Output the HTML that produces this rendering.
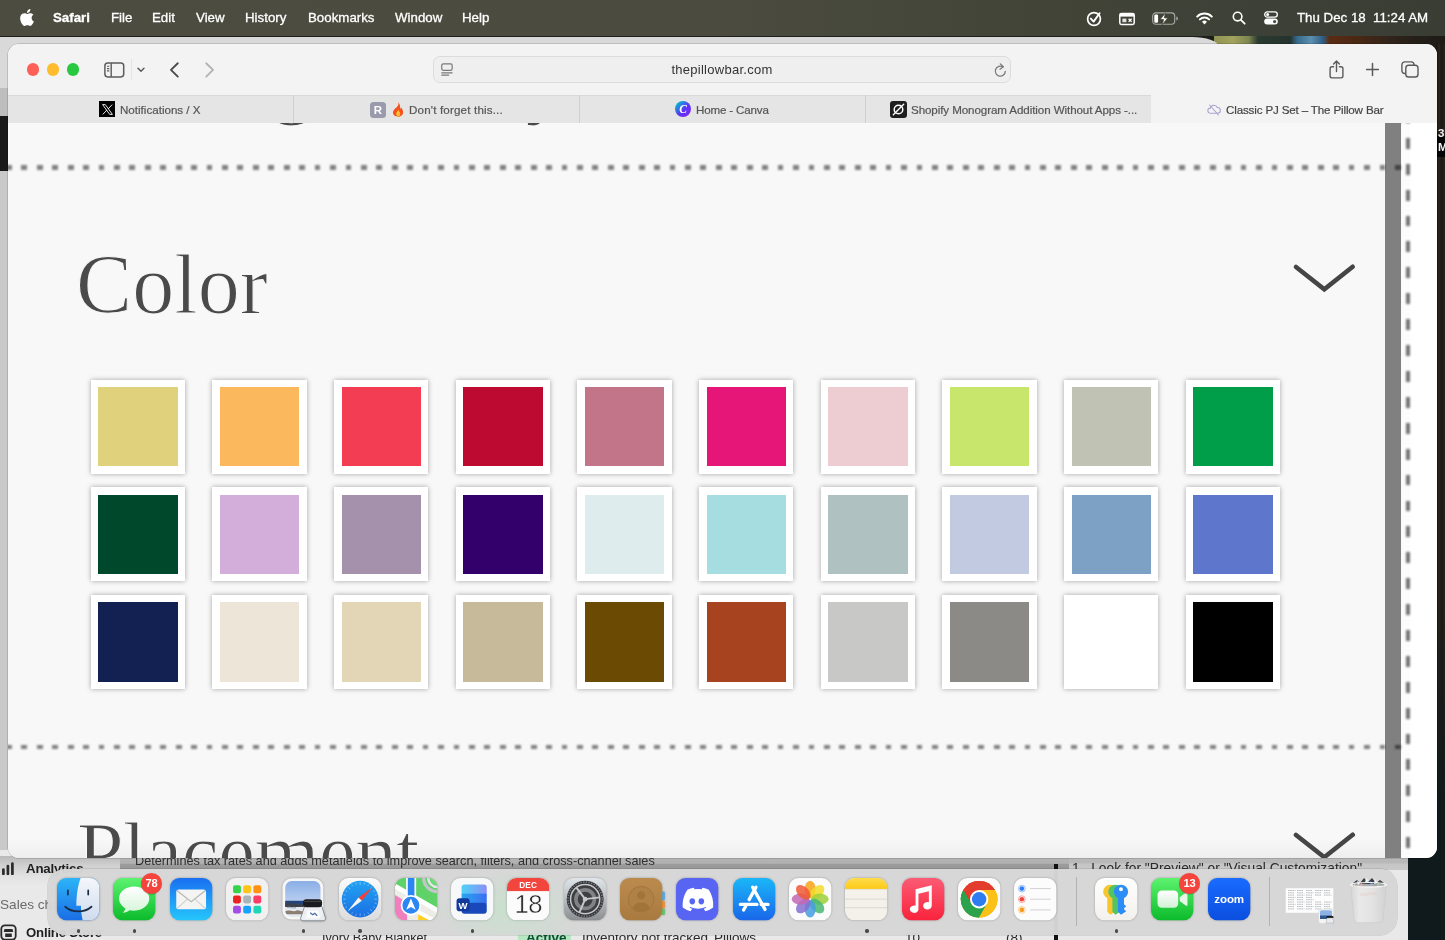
<!DOCTYPE html>
<html lang="en">
<head>
<meta charset="utf-8">
<title>Classic PJ Set – The Pillow Bar</title>
<style>
*{box-sizing:border-box;margin:0;padding:0}
html,body{width:1445px;height:940px;overflow:hidden}
body{position:relative;background:#1b1d1a;font-family:"Liberation Sans",sans-serif;color:#fff}
.abs{position:absolute}
span,.badge,.h2{will-change:transform}
/* wallpaper */
#wall{left:0;top:0;width:1445px;height:940px;background:#1d1f1b}
/* background windows */
#bgwinTop{left:0;top:37px;width:1218px;height:90px;background:#d9d9d9;border-radius:0 26px 0 0 / 0 9px 0 0}
#bgLeftDark{left:0;top:116px;width:9px;height:55px;background:#191919}
#bgLeftTab{left:0;top:88px;width:9px;height:28px;background:#bebebe}
#bgLeftGray{left:0;top:171px;width:9px;height:700px;background:#c9c9c9}
#bgBottom{left:0;top:850px;width:1408px;height:90px;background:#e9e9e9}
/* menubar */
#menubar{left:0;top:0;width:1445px;height:36px;background:linear-gradient(90deg,#4c4d40 0%,#4b4c3f 50%,#414337 75%,#3c4036 90%,#393d34 100%)}
#menubar span{position:absolute;top:9px;font-size:13.3px;line-height:17px;color:#fff;white-space:nowrap;-webkit-text-stroke:.3px #fff}
/* safari window */
#win{left:8px;top:44px;width:1429px;height:814px;border-radius:11px;background:#f8f8f8;overflow:hidden;box-shadow:0 0 0 0.5px rgba(0,0,0,.25)}
#toolbar{left:0;top:0;width:1429px;height:51px;background:#f3f3f3}
#tabbar{left:0;top:51px;width:1429px;height:28.5px;background:#e5e5e5}
#content{left:0;top:79.5px;width:1429px;height:735px;background:#f8f8f8}

#clip{left:0;top:79.3px;width:1429px;height:736px;overflow:hidden}
#wc{left:-8px;top:-123.3px;width:1445px;height:940px}
#pagebg{left:8px;top:123.3px;width:1377.2px;height:736px;background:#f8f8f8}
#graybar{left:1385.2px;top:123.3px;width:16.3px;height:736px;background:#808080}
#strip{left:1401.5px;top:123.3px;width:9px;height:736px;background:#fcfcfc}
#white{left:1410px;top:123.3px;width:28px;height:736px;background:#fff}
.hdots{left:5.670px;width:1395.800px;height:4.700px;background:repeating-linear-gradient(90deg,rgba(0,0,0,.48) 0,rgba(0,0,0,.48) 5.800px,transparent 5.800px,transparent 15.433px);filter:blur(1px)}
#vdash{left:1406.100px;top:111.900px;width:4.200px;height:760px;background:repeating-linear-gradient(180deg,rgba(0,0,0,.55) 0,rgba(0,0,0,.55) 10.800px,transparent 10.800px,transparent 25.900px);filter:blur(.8px)}
.h2{font-family:"Liberation Serif",serif;font-size:84px;line-height:84px;letter-spacing:-1.35px;color:#4a4a4a;white-space:nowrap;font-weight:400;-webkit-text-stroke:1.1px #f8f8f8}
.sw{position:absolute;width:94.3px;height:94.3px;background:#fff;box-shadow:0 0 5px rgba(0,0,0,.34)}
.sw i{position:absolute;left:7.5px;top:7.5px;width:79.3px;height:79.3px;display:block}

#toolbar svg,#tabbar svg{position:absolute;overflow:visible}
.tl{position:absolute;top:19.3px;width:12.4px;height:12.4px;border-radius:50%}
#url{left:425.400px;top:11.700px;width:578px;height:27.200px;border-radius:7px;background:#efefef;border:1px solid #dcdcdc}
#url span{position:absolute;left:0;width:100%;top:5.700px;text-align:center;font-size:13px;line-height:16px;color:#333;letter-spacing:.27px}
.tab{position:absolute;top:0;height:28.5px;width:286px;border-left:1px solid #cfcfcf;box-shadow:inset 0 1px 0 #d9d9d9}
.tab span{position:absolute;top:7.6px;font-size:11.6px;line-height:14px;color:#555;white-space:nowrap;-webkit-text-stroke:.2px #555}
.tab.act{background:#f3f3f3;border-left:0;box-shadow:none}
.tab.act span{color:#444;-webkit-text-stroke:.2px #444}
.fav{position:absolute;top:6.3px;width:16px;height:16px;border-radius:3.5px}

.ic{overflow:visible;filter:drop-shadow(0 .6px .8px rgba(0,0,0,.28))}
.rdot{width:3.400px;height:3.400px;border-radius:50%;background:#4a4a4a}
.badge{width:21px;height:21px;border-radius:50%;background:#f5443b;color:#fff;font-size:11.200px;font-weight:700;line-height:21px;text-align:center;letter-spacing:-.2px;box-shadow:0 .5px 1px rgba(0,0,0,.3)}
.bgt{position:absolute;white-space:nowrap;color:#2a2a2a;font-size:14.500px;line-height:18px}
/* dock */
#dock{left:47.500px;top:869px;width:1349.500px;height:66px;border-radius:17px;background:rgba(214,214,214,.975);box-shadow:0 0 0 0.5px rgba(0,0,0,.18)}
</style>
</head>
<body>
<div id="wall" class="abs"></div>
<div class="abs" style="left:1214px;top:36px;width:231px;height:12px;background:linear-gradient(90deg,#8f9252 0,#a3a35e 8%,#7d8650 15%,#2b3a30 19%,#24332d 33%,#356a8c 36%,#5d8fae 42%,#2f5f86 47%,#5b2c14 50%,#4a2814 62%,#33241a 75%,#241f19 88%,#1d1b17 100%)"></div>
<div class="abs" style="left:1436px;top:44px;width:9px;height:900px;background:linear-gradient(90deg,#15120f 0,#2c251e 35%,#1c1814 60%,#2a231c 100%)"></div>
<div class="abs" style="left:1407px;top:600px;width:38px;height:340px;background:linear-gradient(180deg,rgba(16,25,27,0) 0,rgba(16,25,27,1) 60%,#10191b 100%)"></div>
<div class="abs" style="left:1437px;top:136px;width:8px;height:21px;background:#050505"></div>
<span class="abs" style="left:1437.500px;top:126px;font-size:11.500px;line-height:14px;font-weight:700;color:#f2f2f2">3</span>
<span class="abs" style="left:1437.500px;top:139.500px;font-size:11.500px;line-height:14px;font-weight:700;color:#f2f2f2">M</span>
<div id="bgwinTop" class="abs"></div>
<div id="bgLeftTab" class="abs"></div>
<div id="bgLeftDark" class="abs"></div>
<div id="bgLeftGray" class="abs"></div>
<div id="bgBottom" class="abs"></div>
<div class="abs" style="left:0;top:856px;width:122px;height:30px;background:linear-gradient(180deg,#b9b9b9 0,#cfcfcf 30%,#e3e3e3 70%,#e9e9e9 100%)"></div>
<div class="abs" style="left:120px;top:856px;width:950px;height:12.500px;background:linear-gradient(180deg,#b4b4b4 0,#b1b1b1 56%,#9c9c9c 64%,#979797 100%);overflow:hidden"><span class="bgt" style="left:15px;top:-4.300px;font-size:12.700px;color:#2e2e2e">Determines tax rates and adds metafields to improve search, filters, and cross-channel sales</span></div>
<div class="abs" style="left:1069px;top:856px;width:339px;height:14px;background:linear-gradient(180deg,#bababa 0,#b8b8b8 50%,#c5c5c5 56%,#c8c8c8 100%);overflow:hidden"><span class="bgt" style="left:3px;top:4.200px;font-size:13.800px;color:#2b2b2b">1.&nbsp;&nbsp;Look for "Preview" or "Visual Customization"</span></div>
<div class="abs" style="left:1053.500px;top:863.500px;width:4.500px;height:80px;background:#111"></div>
<svg class="abs" style="left:2px;top:861.500px" width="12" height="13" viewBox="0 0 12 13"><path d="M1.400 12V7.500M5.900 12V4M10.400 12V1.500" stroke="#2a2a2a" stroke-width="2.700" stroke-linecap="round"/></svg>
<span class="bgt" style="left:26px;top:859.500px;font-size:13.300px;color:#1f1f1f;font-weight:700;letter-spacing:-.2px">Analytics</span>
<span class="bgt" style="left:0;top:895.500px;font-size:13.600px;color:#6b6b6b">Sales channels</span>
<svg class="abs" style="left:0;top:924px" width="17" height="17" viewBox="0 0 17 17"><rect x="1.300" y="1.300" width="14.400" height="14.400" rx="3.600" fill="none" stroke="#2a2a2a" stroke-width="1.800"/><path d="M4.500 5h8l.8 3h-9.600ZM5.200 9.500h6.600v3.500H5.200Z" fill="#2a2a2a"/></svg>
<span class="bgt" style="left:26px;top:923.500px;font-size:13.200px;color:#1f1f1f;font-weight:700;letter-spacing:-.2px">Online Store</span>
<span class="bgt" style="left:322px;top:929px;font-size:12.600px">Ivory Baby Blanket</span>
<div class="abs" style="left:518px;top:931px;width:53px;height:12px;background:#b5e7c2"></div>
<span class="bgt" style="left:526px;top:929px;font-size:13.500px;color:#0c5132;font-weight:700">Active</span>
<span class="bgt" style="left:582px;top:929px;font-size:13.500px">Inventory not tracked</span>
<span class="bgt" style="left:714px;top:929px;font-size:13.500px">Pillows</span>
<span class="bgt" style="left:905px;top:929px;font-size:13.500px">10</span>
<span class="bgt" style="left:1006px;top:929px;font-size:13.500px">(8)</span>

<div id="menubar" class="abs">
  <svg class="abs" style="left:19.5px;top:8.5px" width="14" height="17" viewBox="2 0 20 24"><path fill="#fff" d="M12.152 6.896c-.948 0-2.415-1.078-3.96-1.04-2.04.027-3.91 1.183-4.961 3.014-2.117 3.675-.546 9.103 1.519 12.09 1.013 1.454 2.208 3.09 3.792 3.039 1.52-.065 2.09-.987 3.935-.987 1.831 0 2.35.987 3.96.948 1.637-.026 2.676-1.48 3.676-2.948 1.156-1.688 1.636-3.325 1.662-3.415-.039-.013-3.182-1.221-3.22-4.857-.026-3.04 2.48-4.494 2.597-4.559-1.429-2.09-3.623-2.324-4.39-2.376-2-.156-3.675 1.09-4.61 1.09zM15.53 3.83c.843-1.012 1.4-2.427 1.245-3.83-1.207.052-2.662.805-3.532 1.818-.78.896-1.454 2.338-1.273 3.714 1.338.104 2.715-.688 3.559-1.701"/></svg>
  <span style="left:53px;font-weight:700">Safari</span>
  <span style="left:111px">File</span>
  <span style="left:152px">Edit</span>
  <span style="left:195.5px">View</span>
  <span style="left:244.5px">History</span>
  <span style="left:307.5px">Bookmarks</span>
  <span style="left:394.5px">Window</span>
  <span style="left:462px">Help</span>
  <!-- status icons -->
  <svg class="abs" style="left:1086px;top:10px" width="17" height="17" viewBox="0 0 17 17"><circle cx="8" cy="9" r="6.4" fill="none" stroke="#fff" stroke-width="1.7"/><path d="M4.8 8.6 L7.6 11.6 L13.6 3.2" fill="none" stroke="#fff" stroke-width="1.9" stroke-linecap="round" stroke-linejoin="round"/></svg>
  <svg class="abs" style="left:1119px;top:11.500px" width="16" height="14" viewBox="0 0 16 14"><rect x=".8" y="1.6" width="14.4" height="10.8" rx="1.6" fill="none" stroke="#fff" stroke-width="1.5"/><rect x=".8" y="1.6" width="14.4" height="3" fill="#fff"/><rect x="3.4" y="6.6" width="4" height="3.6" fill="#fff" opacity=".85"/><path d="M9.6 6.8l3 3m0-3l-3 3" stroke="#fff" stroke-width="1.3"/></svg>
  <svg class="abs" style="left:1151.5px;top:11.800px" width="27" height="14" viewBox="0 0 27 14"><rect x=".7" y=".9" width="22" height="11.4" rx="3.2" fill="none" stroke="#fff" stroke-opacity=".55" stroke-width="1.1"/><rect x="2.3" y="2.5" width="3.800" height="8.200" rx="1.300" fill="#fff"/><path d="M24.3 4.6c1.1.3 1.6 1.1 1.6 2s-.5 1.700-1.600 2z" fill="#fff" fill-opacity=".55"/><path d="M13.400 0.800 L8.200 7.500 h3.400 l-1.400 5.300 l5.600 -6.900 h-3.500z" fill="#fff" stroke="#4a4b3f" stroke-width=".8"/></svg>
  <svg class="abs" style="left:1196px;top:11.600px" width="17" height="13" viewBox="0 0 17 13"><path d="M1.200 4.600 a10.400 10.400 0 0 1 14.600 0" fill="none" stroke="#fff" stroke-width="2" stroke-linecap="round"/><path d="M3.900 7.400 a6.600 6.600 0 0 1 9.200 0" fill="none" stroke="#fff" stroke-width="2" stroke-linecap="round"/><path d="M8.500 12.400 l-2.500 -2.700 a3.600 3.600 0 0 1 5 0z" fill="#fff"/></svg>
  <svg class="abs" style="left:1231.5px;top:11px" width="14" height="14" viewBox="0 0 14 14"><circle cx="5.600" cy="5.600" r="4.300" fill="none" stroke="#fff" stroke-width="1.6"/><path d="M8.800 8.800 L12.700 12.700" stroke="#fff" stroke-width="1.8" stroke-linecap="round"/></svg>
  <svg class="abs" style="left:1264px;top:11px" width="14" height="14" viewBox="0 0 14 14"><rect x=".7" y=".9" width="12.600" height="5.200" rx="2.600" fill="none" stroke="#fff" stroke-width="1.3"/><circle cx="3.600" cy="3.500" r="1.500" fill="#fff"/><rect x=".2" y="7.600" width="13.600" height="6" rx="3" fill="#fff"/><circle cx="10.600" cy="10.600" r="1.600" fill="#4a4b3f"/></svg>
  <span style="left:1296.500px">Thu Dec 18</span>
  <span style="left:1373px">11:24 AM</span>
</div>

<div id="win" class="abs">
  <div id="toolbar" class="abs">
    <div class="tl" style="left:19px;background:#fe5f57"></div>
    <div class="tl" style="left:38.800px;background:#febc2e"></div>
    <div class="tl" style="left:58.500px;background:#28c840"></div>
    <svg style="left:95.500px;top:17.500px" width="21" height="16" viewBox="0 0 21 16"><rect x=".9" y=".9" width="18.800" height="14" rx="2.800" fill="none" stroke="#5c5c5c" stroke-width="1.500"/><path d="M7.200 1v14" stroke="#5c5c5c" stroke-width="1.400"/><path d="M3 4.300h2.300M3 6.600h2.300M3 8.900h2.300" stroke="#5c5c5c" stroke-width="1.100"/></svg>
    <div class="abs" style="left:122.500px;top:15px;width:1px;height:21px;background:#e4e4e4"></div>
    <svg style="left:128.600px;top:22.800px" width="8" height="6" viewBox="0 0 8 6"><path d="M1 1.200l3 3 3-3" fill="none" stroke="#5c5c5c" stroke-width="1.500" stroke-linecap="round" stroke-linejoin="round"/></svg>
    <svg style="left:160.500px;top:17.600px" width="11" height="16" viewBox="0 0 11 16"><path d="M8.800 1.300L2 7.900l6.800 6.700" fill="none" stroke="#4a4a4a" stroke-width="1.900" stroke-linecap="round" stroke-linejoin="round"/></svg>
    <svg style="left:195.500px;top:17.600px" width="11" height="16" viewBox="0 0 11 16"><path d="M2.200 1.300L9 7.900l-6.800 6.700" fill="none" stroke="#b3b3b3" stroke-width="1.900" stroke-linecap="round" stroke-linejoin="round"/></svg>
    <div id="url" class="abs"><span>thepillowbar.com</span>
      <svg style="left:6.300px;top:6.300px" width="12" height="13" viewBox="0 0 13 14"><rect x=".8" y=".8" width="11.300" height="7.200" rx="1.800" fill="none" stroke="#7a7a7a" stroke-width="1.300"/><path d="M3 4.600h6.800" stroke="#7a7a7a" stroke-width="1.200" opacity=".0"/><path d="M.8 10.600h11.300M.8 13.200h7.400" stroke="#7a7a7a" stroke-width="1.300" stroke-linecap="round"/></svg>
      <svg style="left:559.200px;top:6.400px" width="13" height="14" viewBox="0 0 13 14"><path d="M11.300 8.300a5 5 0 1 1-2.300-4.300" fill="none" stroke="#7a7a7a" stroke-width="1.300" stroke-linecap="round"/><path d="M6.300.9l3 2.900-3.300 2.400" fill="none" stroke="#7a7a7a" stroke-width="1.300" stroke-linecap="round" stroke-linejoin="round"/></svg>
    </div>
    <svg style="left:1320.500px;top:15.500px" width="15" height="19" viewBox="0 0 15 19"><path d="M4.600 6.700H2.900a1.800 1.800 0 0 0-1.800 1.800v7.600a1.800 1.800 0 0 0 1.800 1.800h9.200a1.800 1.800 0 0 0 1.800-1.800V8.500a1.800 1.800 0 0 0-1.800-1.800h-1.700" fill="none" stroke="#5a5a5a" stroke-width="1.400" stroke-linecap="round"/><path d="M7.500 11.600V1.300M4.600 3.900l2.900-2.800 2.900 2.800" fill="none" stroke="#5a5a5a" stroke-width="1.400" stroke-linecap="round" stroke-linejoin="round"/></svg>
    <svg style="left:1357.500px;top:18.500px" width="13" height="13" viewBox="0 0 13 13"><path d="M6.500.6v11.800M.6 6.500h11.800" stroke="#5a5a5a" stroke-width="1.500" stroke-linecap="round"/></svg>
    <svg style="left:1392.500px;top:16.500px" width="18" height="17" viewBox="0 0 18 17"><rect x="4.800" y="4.300" width="12.200" height="11.700" rx="2.800" fill="#f3f3f3" stroke="#5a5a5a" stroke-width="1.400"/><path d="M4.700 12.500h-1a2.800 2.800 0 0 1-2.800-2.800V3.700A2.800 2.800 0 0 1 3.700.9h6.500A2.800 2.800 0 0 1 13 3.700v.5" fill="none" stroke="#5a5a5a" stroke-width="1.400"/></svg>
  </div>
  <div id="tabbar" class="abs">
    <div class="tab" style="left:0;border-left:0">
      <div class="fav" style="left:91.200px;background:#000;border-radius:0"><svg style="left:2.500px;top:2.500px" width="11" height="11" viewBox="0 0 11 11"><path d="M.6.600h2.700l7.100 9.800H7.700z" fill="none" stroke="#fff" stroke-width=".9"/><path d="M.8 10.400L4.900 6M10.200.6L6.200 4.900" stroke="#fff" stroke-width=".9"/></svg></div>
      <span style="left:112.400px">Notifications / X</span>
    </div>
    <div class="tab" style="left:285px">
      <div class="fav" style="left:76px;top:6.900px;background:#9a9aad"><svg style="left:0;top:0" width="16" height="16" viewBox="0 0 16 16"><text x="8" y="12.200" text-anchor="middle" font-family="Liberation Sans,sans-serif" font-weight="700" font-size="11.500" fill="#fff">R</text></svg></div>
      <svg style="left:98px;top:6.800px" width="12" height="15" viewBox="0 0 12 15"><path d="M6.300.3c.6 2.400-.4 3.700-1.700 5C3.200 6.600 1 8 1 10.600 1 13.100 3.300 14.800 6 14.800s5.100-1.600 5.100-4.500c0-2.300-1.300-3.500-1.900-5.100-.5.700-.6 1.400-1 2C8.300 4.600 7.900 1.900 6.300.3z" fill="#f4511e"/><path d="M6.100 7.400c.3 1.500-1.900 2.400-1.900 4.400 0 1.500 1 2.600 2 2.600s2.100-1 2.100-2.500c0-1.800-1.500-2.700-2.200-4.500z" fill="#ffc233"/></svg>
      <span style="left:114.800px;letter-spacing:.17px">Don't forget this...</span>
    </div>
    <div class="tab" style="left:571px">
      <div class="fav" style="left:95.200px;top:6.300px;border-radius:50%;background:linear-gradient(135deg,#00c4cc 10%,#5a32fa 55%,#7d2ae8 90%)"><svg style="left:0;top:0" width="16" height="16" viewBox="0 0 16 16"><text x="8.200" y="12" text-anchor="middle" font-family="Liberation Serif,serif" font-style="italic" font-weight="700" font-size="11.500" fill="#fff">C</text></svg></div>
      <span style="left:116.400px;letter-spacing:-.17px">Home - Canva</span>
    </div>
    <div class="tab" style="left:857px">
      <div class="fav" style="left:23.500px;top:5.600px;width:17.600px;height:17.600px;background:#1f1f1f;border-radius:3px"><svg style="left:2.300px;top:2.300px" width="13" height="13" viewBox="0 0 13 13"><circle cx="6.500" cy="6.500" r="4.300" fill="none" stroke="#fff" stroke-width="1.500"/><path d="M1.300 11.700L11.700 1.300" stroke="#fff" stroke-width="1.400" stroke-linecap="round"/></svg></div>
      <span style="left:45px;letter-spacing:-.09px">Shopify Monogram Addition Without Apps -...</span>
    </div>
    <div class="tab act" style="left:1143px">
      <svg style="left:56px;top:8.500px" width="14" height="12" viewBox="0 0 14 12"><path d="M3.600 9.300a2.600 2.600 0 0 1-.3-5.200 3.700 3.700 0 0 1 7-.6 2.900 2.900 0 0 1 .3 5.800z" fill="none" stroke="#a9a3cf" stroke-width="1.100"/><path d="M2.600 1l8.800 10" stroke="#a9a3cf" stroke-width="1.100" stroke-linecap="round"/></svg>
      <span style="left:75.400px;letter-spacing:-.15px">Classic PJ Set – The Pillow Bar</span>
    </div>
  </div>
  <div class="abs" style="left:0;top:78.800px;width:1429px;height:.8px;background:#dcdcdc"></div>
  <div id="clip" class="abs"><div id="wc" class="abs">
  <div id="pagebg" class="abs"></div>
  <div id="graybar" class="abs"></div>
  <div id="strip" class="abs"></div>
  <div id="white" class="abs"></div>
  <div class="abs h2" style="left:76px;top:38px">Monogram Style</div>
  <div class="abs hdots" style="top:164.900px"></div>
  <div class="abs hdots" style="top:744.700px"></div>
  <div id="vdash" class="abs"></div>
  <div class="abs" style="left:8px;top:838px;width:1377px;height:21px;background:linear-gradient(180deg,rgba(0,0,0,0),rgba(0,0,0,.045))"></div>
  <div class="abs h2" style="left:76px;top:243.200px;letter-spacing:0.1px">Color</div>
  <svg class="abs" style="left:1280px;top:255px" width="90" height="50" viewBox="0 0 90 50"><polyline points="16,12 44.3,34.2 72.7,11.8" fill="none" stroke="#454545" stroke-width="4.6" stroke-linecap="round" stroke-linejoin="miter"/></svg>
<div class="sw" style="left:90.80px;top:379.50px"><i style="background:#e0d27c"></i></div>
<div class="sw" style="left:212.47px;top:379.50px"><i style="background:#fcb85c"></i></div>
<div class="sw" style="left:334.14px;top:379.50px"><i style="background:#f23d52"></i></div>
<div class="sw" style="left:455.81px;top:379.50px"><i style="background:#bd0a30"></i></div>
<div class="sw" style="left:577.48px;top:379.50px"><i style="background:#c27489"></i></div>
<div class="sw" style="left:699.15px;top:379.50px"><i style="background:#e51677"></i></div>
<div class="sw" style="left:820.82px;top:379.50px"><i style="background:#edcdd2"></i></div>
<div class="sw" style="left:942.49px;top:379.50px"><i style="background:#c8e56c"></i></div>
<div class="sw" style="left:1064.16px;top:379.50px"><i style="background:#c0c2b3"></i></div>
<div class="sw" style="left:1185.83px;top:379.50px"><i style="background:#009e49"></i></div>
<div class="sw" style="left:90.80px;top:487.15px"><i style="background:#00482b"></i></div>
<div class="sw" style="left:212.47px;top:487.15px"><i style="background:#d3aeda"></i></div>
<div class="sw" style="left:334.14px;top:487.15px"><i style="background:#a591ab"></i></div>
<div class="sw" style="left:455.81px;top:487.15px"><i style="background:#33006b"></i></div>
<div class="sw" style="left:577.48px;top:487.15px"><i style="background:#dfeced"></i></div>
<div class="sw" style="left:699.15px;top:487.15px"><i style="background:#a5dde1"></i></div>
<div class="sw" style="left:820.82px;top:487.15px"><i style="background:#afc1c0"></i></div>
<div class="sw" style="left:942.49px;top:487.15px"><i style="background:#c1cae0"></i></div>
<div class="sw" style="left:1064.16px;top:487.15px"><i style="background:#7da1c4"></i></div>
<div class="sw" style="left:1185.83px;top:487.15px"><i style="background:#5e76cb"></i></div>
<div class="sw" style="left:90.80px;top:594.80px"><i style="background:#122052"></i></div>
<div class="sw" style="left:212.47px;top:594.80px"><i style="background:#ede6d8"></i></div>
<div class="sw" style="left:334.14px;top:594.80px"><i style="background:#e3d6b6"></i></div>
<div class="sw" style="left:455.81px;top:594.80px"><i style="background:#c7ba9b"></i></div>
<div class="sw" style="left:577.48px;top:594.80px"><i style="background:#6b4a03"></i></div>
<div class="sw" style="left:699.15px;top:594.80px"><i style="background:#a84320"></i></div>
<div class="sw" style="left:820.82px;top:594.80px"><i style="background:#c8c8c6"></i></div>
<div class="sw" style="left:942.49px;top:594.80px"><i style="background:#8b8a86"></i></div>
<div class="sw" style="left:1064.16px;top:594.80px"><i style="background:#ffffff"></i></div>
<div class="sw" style="left:1185.83px;top:594.80px"><i style="background:#000000"></i></div>

  <div class="abs h2" style="left:77.300px;top:810.500px;letter-spacing:-0.95px">Placement</div>
  <svg class="abs" style="left:1280px;top:822.500px" width="90" height="50" viewBox="0 0 90 50"><polyline points="16,12 44.3,34.2 72.7,11.8" fill="none" stroke="#454545" stroke-width="4.6" stroke-linecap="round" stroke-linejoin="miter"/></svg>
</div></div>

</div>

<div id="dock" class="abs"><div class="abs" style="left:385px;top:0;width:150px;height:66px;background:radial-gradient(ellipse at 50% 60%,rgba(190,232,198,.55),rgba(190,232,198,0) 70%)"></div></div>
<div id="dockitems">
<svg class="abs ic" style="left:57.00px;top:878px" width="42.3" height="42.3" viewBox="0 0 42 42"><defs><linearGradient id="fa" x1="0" y1="0" x2="0" y2="1"><stop offset="0" stop-color="#2db4f7"/><stop offset="1" stop-color="#1a6ee6"/></linearGradient><linearGradient id="fb" x1="0" y1="0" x2="0" y2="1"><stop offset="0" stop-color="#f4f7fb"/><stop offset="1" stop-color="#cfdcee"/></linearGradient></defs><rect width="42" height="42" rx="9.4" fill="url(#fa)"/><path d="M23.500 0H32.600A9.400 9.400 0 0 1 42 9.400V32.600A9.400 9.400 0 0 1 32.600 42H25.500C24.300 37 23.800 32 23.800 27.500H19.200C19.200 17 20.800 7 23.500 0Z" fill="url(#fb)"/><path d="M10.800 12.200v4.300M31 12.200v4.300" stroke="#1c2b44" stroke-width="1.700" stroke-linecap="round"/><path d="M8.200 28.500c7 6.200 19 6.200 26 0" fill="none" stroke="#1c2b44" stroke-width="1.800" stroke-linecap="round"/></svg>
<svg class="abs ic" style="left:113.30px;top:878px" width="42.3" height="42.3" viewBox="0 0 42 42"><defs><linearGradient id="ma" x1="0" y1="0" x2="0" y2="1"><stop offset="0" stop-color="#5df36f"/><stop offset="1" stop-color="#0cbb2b"/></linearGradient><linearGradient id="mb" x1="0" y1="0" x2="0" y2="1"><stop offset="0" stop-color="#ffffff"/><stop offset="1" stop-color="#d5f5d9"/></linearGradient></defs><rect width="42" height="42" rx="9.4" fill="url(#ma)"/><path d="M21 8.500c-8.300 0-15 5.300-15 11.900 0 4 2.500 7.500 6.300 9.700-.3 1.700-1.200 3.200-2.600 4.300 2.600 0 4.900-.9 6.700-2.500 1.500.3 3 .5 4.600.5 8.300 0 15-5.300 15-12S29.300 8.500 21 8.500Z" fill="url(#mb)"/></svg>
<svg class="abs ic" style="left:169.60px;top:878px" width="42.3" height="42.3" viewBox="0 0 42 42"><defs><linearGradient id="la" x1="0" y1="0" x2="0" y2="1"><stop offset="0" stop-color="#1a6ff0"/><stop offset="1" stop-color="#25c6fc"/></linearGradient></defs><rect width="42" height="42" rx="9.4" fill="url(#la)"/><rect x="6.200" y="11.500" width="29.600" height="19.600" rx="2.600" fill="#f4f4f2"/><path d="M6.800 12.500l14.200 11 14.200-11" fill="none" stroke="#b9b9b4" stroke-width="1.300"/><path d="M6.800 30.500l10.400-9.600M35.200 30.500l-10.400-9.600" stroke="#cfcfca" stroke-width="1"/></svg>
<svg class="abs ic" style="left:225.90px;top:878px" width="42.3" height="42.3" viewBox="0 0 42 42"><rect width="42" height="42" rx="9.4" fill="#f1f1f1"/><rect x="7.0" y="7.3" width="7.800" height="7.800" rx="2" fill="#35d34a"/><rect x="17.1" y="7.3" width="7.800" height="7.800" rx="2" fill="#ffc417"/><rect x="27.2" y="7.3" width="7.800" height="7.800" rx="2" fill="#ff9210"/><rect x="7.0" y="17.4" width="7.800" height="7.800" rx="2" fill="#ea2320"/><rect x="17.1" y="17.4" width="7.800" height="7.800" rx="2" fill="#a9b3b8"/><rect x="27.2" y="17.4" width="7.800" height="7.800" rx="2" fill="#fb3d68"/><rect x="7.0" y="27.5" width="7.800" height="7.800" rx="2" fill="#a54be8"/><rect x="17.1" y="27.5" width="7.800" height="7.800" rx="2" fill="#19a4fb"/><rect x="27.2" y="27.5" width="7.800" height="7.800" rx="2" fill="#21d6b4"/></svg>
<svg class="abs ic" style="left:282.20px;top:878px" width="42.3" height="42.3" viewBox="0 0 42 42"><defs><linearGradient id="pa" x1="0" y1="0" x2="0" y2="1"><stop offset="0" stop-color="#8aaee6"/><stop offset=".5" stop-color="#b3caee"/><stop offset="1" stop-color="#dbe6f4"/></linearGradient></defs><rect x=".5" y=".3" width="40.500" height="41" rx="9" fill="#f7f7f7"/><clipPath id="pvc"><rect x="3.200" y="3" width="35" height="35.500" rx="6.500"/></clipPath><g clip-path="url(#pvc)"><rect x="3" y="3" width="36" height="36" fill="url(#pa)"/><rect x="3" y="27" width="36" height="12" fill="#e4eaf0"/><path d="M3 22.500h22v5.500H3Z" fill="#23457e"/><path d="M3 24.500c3-1 5 1.500 8 .8s5 1.200 9 .4l2 3H3Z" fill="#3d434c"/><path d="M3 33c4-2 8 1 11-.5s6 2 9 .5v3H3Z" fill="#8c7f72"/><path d="M5 29.500c3-1 6 .8 9 0" stroke="#a8b4c0" stroke-width="1.300" fill="none"/></g><path d="M22.500 28h17l3.600 11.500a2.300 2.300 0 0 1-2.200 3H20.800a2.300 2.300 0 0 1-2.200-3Z" fill="#eef1f4" fill-opacity=".93" stroke="#7d848c" stroke-width=".9"/><path d="M25.500 32.500h10.500l2 7H24Z" fill="#fbfcfd"/><path d="M28 34.500l2.500 2 2-1.500 2.500 2.500" stroke="#4d6fa3" stroke-width="1.300" fill="none"/><rect x="21" y="21" width="18.800" height="8" rx="3.200" fill="#1a1c1f"/><path d="M22 23.200h16.800" stroke="#4a4d52" stroke-width=".9"/></svg>
<svg class="abs ic" style="left:338.50px;top:878px" width="42.3" height="42.3" viewBox="0 0 42 42"><defs><linearGradient id="sa" x1="0" y1="0" x2="0" y2="1"><stop offset="0" stop-color="#fbfbfb"/><stop offset="1" stop-color="#dcdcdc"/></linearGradient><linearGradient id="sb" x1="0" y1="0" x2="0" y2="1"><stop offset="0" stop-color="#22a2f2"/><stop offset="1" stop-color="#1a6fe3"/></linearGradient></defs><rect width="42" height="42" rx="9.4" fill="url(#sa)"/><circle cx="21" cy="21" r="18.200" fill="url(#sb)"/><path d="M21 4.200v2.8" stroke="#fff" stroke-opacity=".6" stroke-width=".6" transform="rotate(0 21 21)"/><path d="M21 4.200v1.7" stroke="#fff" stroke-opacity=".6" stroke-width=".6" transform="rotate(15 21 21)"/><path d="M21 4.200v1.7" stroke="#fff" stroke-opacity=".6" stroke-width=".6" transform="rotate(30 21 21)"/><path d="M21 4.200v2.8" stroke="#fff" stroke-opacity=".6" stroke-width=".6" transform="rotate(45 21 21)"/><path d="M21 4.200v1.7" stroke="#fff" stroke-opacity=".6" stroke-width=".6" transform="rotate(60 21 21)"/><path d="M21 4.200v1.7" stroke="#fff" stroke-opacity=".6" stroke-width=".6" transform="rotate(75 21 21)"/><path d="M21 4.200v2.8" stroke="#fff" stroke-opacity=".6" stroke-width=".6" transform="rotate(90 21 21)"/><path d="M21 4.200v1.7" stroke="#fff" stroke-opacity=".6" stroke-width=".6" transform="rotate(105 21 21)"/><path d="M21 4.200v1.7" stroke="#fff" stroke-opacity=".6" stroke-width=".6" transform="rotate(120 21 21)"/><path d="M21 4.200v2.8" stroke="#fff" stroke-opacity=".6" stroke-width=".6" transform="rotate(135 21 21)"/><path d="M21 4.200v1.7" stroke="#fff" stroke-opacity=".6" stroke-width=".6" transform="rotate(150 21 21)"/><path d="M21 4.200v1.7" stroke="#fff" stroke-opacity=".6" stroke-width=".6" transform="rotate(165 21 21)"/><path d="M21 4.200v2.8" stroke="#fff" stroke-opacity=".6" stroke-width=".6" transform="rotate(180 21 21)"/><path d="M21 4.200v1.7" stroke="#fff" stroke-opacity=".6" stroke-width=".6" transform="rotate(195 21 21)"/><path d="M21 4.200v1.7" stroke="#fff" stroke-opacity=".6" stroke-width=".6" transform="rotate(210 21 21)"/><path d="M21 4.200v2.8" stroke="#fff" stroke-opacity=".6" stroke-width=".6" transform="rotate(225 21 21)"/><path d="M21 4.200v1.7" stroke="#fff" stroke-opacity=".6" stroke-width=".6" transform="rotate(240 21 21)"/><path d="M21 4.200v1.7" stroke="#fff" stroke-opacity=".6" stroke-width=".6" transform="rotate(255 21 21)"/><path d="M21 4.200v2.8" stroke="#fff" stroke-opacity=".6" stroke-width=".6" transform="rotate(270 21 21)"/><path d="M21 4.200v1.7" stroke="#fff" stroke-opacity=".6" stroke-width=".6" transform="rotate(285 21 21)"/><path d="M21 4.200v1.7" stroke="#fff" stroke-opacity=".6" stroke-width=".6" transform="rotate(300 21 21)"/><path d="M21 4.200v2.8" stroke="#fff" stroke-opacity=".6" stroke-width=".6" transform="rotate(315 21 21)"/><path d="M21 4.200v1.7" stroke="#fff" stroke-opacity=".6" stroke-width=".6" transform="rotate(330 21 21)"/><path d="M21 4.200v1.7" stroke="#fff" stroke-opacity=".6" stroke-width=".6" transform="rotate(345 21 21)"/><path d="M33.300 9.200L19.400 19.400l3.200 3.200Z" fill="#f0413a"/><path d="M8.700 32.800l13.900-10.200-3.200-3.200Z" fill="#f7f7f7"/></svg>
<svg class="abs ic" style="left:394.80px;top:878px" width="42.3" height="42.3" viewBox="0 0 42 42"><clipPath id="mpc"><rect width="42" height="42" rx="9.4"/></clipPath><g clip-path="url(#mpc)"><rect width="42" height="42" fill="#5fd268"/><path d="M0 8l42 24v10H0Z" fill="#eeece6"/><path d="M0 17l12 7v18H0Z" fill="#f27fbd"/><path d="M22 20.500l20 11.500v-8L24 13.500Z" fill="#5fd268"/><path d="M23 34l9 5.200V42H23Z" fill="#ffd021"/><path d="M23 34l9 5.200 3-2.200v5H32Z" fill="#ffd021"/><path d="M0 8l42 24" stroke="#fff" stroke-width="4.500"/><path d="M18 31l24 13" stroke="#fff" stroke-width="4"/><circle cx="42" cy="0" r="13.500" fill="none" stroke="#c3c5cb" stroke-width="3.400"/><circle cx="42" cy="0" r="9" fill="none" stroke="#e4e4e8" stroke-width="2.600"/><circle cx="42" cy="0" r="7" fill="#6fdc7c"/><path d="M11 0h10v26H11Z" fill="#fff"/><path d="M12.700 0h6.600v26h-6.600Z" fill="#2a86f3"/></g><circle cx="15.800" cy="27" r="9.300" fill="#2a86f3" stroke="#fff" stroke-width="1.700"/><path d="M15.800 20.300l4.700 11.200-4.700-2.700-4.700 2.700Z" fill="#fff"/></svg>
<svg class="abs ic" style="left:451.10px;top:878px" width="42.3" height="42.3" viewBox="0 0 42 42"><defs><linearGradient id="wa" x1="0" y1="0" x2="1" y2="0"><stop offset="0" stop-color="#4fd1f7"/><stop offset="1" stop-color="#8a8ff5"/></linearGradient><linearGradient id="wb" x1="0" y1="0" x2="1" y2="0"><stop offset="0" stop-color="#2aa6f2"/><stop offset="1" stop-color="#3c6df0"/></linearGradient></defs><rect width="42" height="42" rx="9.4" fill="#f7f8fa"/><rect x="10.500" y="6.500" width="25" height="11" rx="3" fill="url(#wa)"/><rect x="10.500" y="15.500" width="25" height="11" fill="url(#wb)"/><rect x="10.500" y="24.500" width="25" height="11" rx="3" fill="#1848b9"/><rect x="5.500" y="20" width="13" height="13" rx="2.800" fill="#123a9c"/><text x="12" y="30.300" text-anchor="middle" font-family="Liberation Sans,sans-serif" font-weight="700" font-size="9.500" fill="#fff">W</text></svg>
<svg class="abs ic" style="left:507.40px;top:878px" width="42.3" height="42.3" viewBox="0 0 42 42"><clipPath id="cc"><rect width="42" height="42" rx="9.4"/></clipPath><g clip-path="url(#cc)"><rect width="42" height="42" fill="#fbfbfb"/><rect width="42" height="13" fill="#f2453d"/></g><text x="21" y="10.400" text-anchor="middle" font-family="Liberation Sans,sans-serif" font-weight="700" font-size="8.200" fill="#fff" letter-spacing=".2">DEC</text><text x="21" y="35" text-anchor="middle" font-family="Liberation Sans,sans-serif" font-size="25.500" fill="#262626" stroke="#fbfbfb" stroke-width=".5" letter-spacing="-.6">18</text></svg>
<svg class="abs ic" style="left:563.70px;top:878px" width="42.3" height="42.3" viewBox="0 0 42 42"><defs><linearGradient id="ga" x1="0" y1="0" x2="0" y2="1"><stop offset="0" stop-color="#dfe5ea"/><stop offset=".5" stop-color="#b9bdc1"/><stop offset="1" stop-color="#8b8e91"/></linearGradient></defs><rect width="42" height="42" rx="9.4" fill="url(#ga)"/><circle cx="21" cy="21" r="18.300" fill="#2f3134"/><circle cx="21" cy="21" r="17" fill="none" stroke="#74777b" stroke-width="1.700" stroke-dasharray="1.500 1.170"/><circle cx="21" cy="21" r="14.500" fill="#3d3f42" stroke="#c6c9cc" stroke-width="1.500"/><circle cx="21" cy="21" r="9.200" fill="none" stroke="#808488" stroke-width="3.600"/><path d="M21 21V6.600" stroke="#c6c9cc" stroke-width="1.900" transform="rotate(-37 21 21)"/><path d="M21 21V6.600" stroke="#c6c9cc" stroke-width="1.900" transform="rotate(83 21 21)"/><path d="M21 21V6.600" stroke="#c6c9cc" stroke-width="1.900" transform="rotate(203 21 21)"/><circle cx="21" cy="21" r="2.300" fill="#c6c9cc"/></svg>
<svg class="abs ic" style="left:620.00px;top:878px" width="42.3" height="42.3" viewBox="0 0 42 42"><defs><linearGradient id="ca" x1="0" y1="0" x2="0" y2="1"><stop offset="0" stop-color="#bb8b4e"/><stop offset="1" stop-color="#a97a3f"/></linearGradient></defs><rect x="38" y="13.700" width="6.500" height="8.300" rx="1" fill="#4aa7ea"/><rect x="38" y="22.800" width="6.500" height="7.200" rx="1" fill="#f08a2c"/><rect x="38" y="30.500" width="6.500" height="6.300" rx="1" fill="#5fc466"/><rect width="42" height="42" rx="9.4" fill="url(#ca)"/><circle cx="21" cy="21" r="12.700" fill="#b08146" stroke="#a17439" stroke-width=".9"/><circle cx="21" cy="17.200" r="4.100" fill="#a17439"/><path d="M12.300 30a9 7.500 0 0 1 17.400 0a12.700 12.700 0 0 1-17.400 0Z" fill="#a17439"/></svg>
<svg class="abs ic" style="left:676.30px;top:878px" width="42.3" height="42.3" viewBox="0 0 42 42"><rect width="42" height="42" rx="9.4" fill="#5865f2"/><g transform="translate(20.650 21.400) scale(1.150) translate(-21.200 -20.700)"><path d="M31.600 12.200a22 22 0 0 0-5.500-1.700l-.7 1.400a20 20 0 0 0-6.100 0l-.7-1.400a22 22 0 0 0-5.500 1.700C9.600 17.400 8.700 22.500 9.100 27.500a22 22 0 0 0 6.700 3.400l1.400-2.300a14 14 0 0 1-2.300-1.100l.6-.4a15.700 15.700 0 0 0 13.400 0l.6.400c-.7.400-1.500.8-2.300 1.100l1.400 2.300a22 22 0 0 0 6.700-3.400c.5-5.800-.9-10.800-3.700-15.300Z" fill="#fff"/><ellipse cx="17.300" cy="22.200" rx="2.400" ry="2.700" fill="#5865f2"/><ellipse cx="25.100" cy="22.200" rx="2.400" ry="2.700" fill="#5865f2"/></g></svg>
<svg class="abs ic" style="left:732.60px;top:878px" width="42.3" height="42.3" viewBox="0 0 42 42"><defs><linearGradient id="aa" x1="0" y1="0" x2="0" y2="1"><stop offset="0" stop-color="#1ab7f8"/><stop offset="1" stop-color="#1a66ea"/></linearGradient></defs><rect width="42" height="42" rx="9.4" fill="url(#aa)"/><path d="M19.500 9.200l12.300 22M22.800 9.200L16 21.500M12.700 27.800l-2.200 4M7.300 26.200h16.500M28 26.200h6.800" stroke="#fff" stroke-width="3.300" stroke-linecap="round" fill="none"/></svg>
<svg class="abs ic" style="left:788.90px;top:878px" width="42.3" height="42.3" viewBox="0 0 42 42"><rect width="42" height="42" rx="9.4" fill="#fbfbfb"/><ellipse cx="21" cy="11.400" rx="5.500" ry="8.700" fill="#f7a21c" fill-opacity=".86" transform="rotate(0 21 21)"/><ellipse cx="21" cy="11.400" rx="5.500" ry="8.700" fill="#f2dc2a" fill-opacity=".86" transform="rotate(45 21 21)"/><ellipse cx="21" cy="11.400" rx="5.500" ry="8.700" fill="#9ed03a" fill-opacity=".86" transform="rotate(90 21 21)"/><ellipse cx="21" cy="11.400" rx="5.500" ry="8.700" fill="#49b873" fill-opacity=".86" transform="rotate(135 21 21)"/><ellipse cx="21" cy="11.400" rx="5.500" ry="8.700" fill="#479de0" fill-opacity=".86" transform="rotate(180 21 21)"/><ellipse cx="21" cy="11.400" rx="5.500" ry="8.700" fill="#8571d2" fill-opacity=".86" transform="rotate(225 21 21)"/><ellipse cx="21" cy="11.400" rx="5.500" ry="8.700" fill="#c468b4" fill-opacity=".86" transform="rotate(270 21 21)"/><ellipse cx="21" cy="11.400" rx="5.500" ry="8.700" fill="#ef5a35" fill-opacity=".86" transform="rotate(315 21 21)"/></svg>
<svg class="abs ic" style="left:845.20px;top:878px" width="42.3" height="42.3" viewBox="0 0 42 42"><defs><linearGradient id="na" x1="0" y1="0" x2="0" y2="1"><stop offset="0" stop-color="#ffdc4a"/><stop offset="1" stop-color="#fdc916"/></linearGradient></defs><clipPath id="nc"><rect width="42" height="42" rx="9.4"/></clipPath><g clip-path="url(#nc)"><rect width="42" height="42" fill="#f3f1ea"/><rect width="42" height="11" fill="url(#na)"/><path d="M0 21h42M0 29.500h42" stroke="#d9d6cc" stroke-width=".9"/><path d="M0 11.300h42" stroke="#e2dfd4" stroke-width=".8"/></g></svg>
<svg class="abs ic" style="left:901.50px;top:878px" width="42.3" height="42.3" viewBox="0 0 42 42"><defs><linearGradient id="ua" x1="0" y1="0" x2="0" y2="1"><stop offset="0" stop-color="#fc5b74"/><stop offset="1" stop-color="#f9233c"/></linearGradient></defs><rect width="42" height="42" rx="9.4" fill="url(#ua)"/><g transform="translate(19.900 20.800) scale(1.190) translate(-22.400 -21.300)"><path d="M17 13.200l13.500-3.400v17.200a3.600 3.100 0 1 1-2.400-2.900V14.800l-8.700 2.200v12.800a3.600 3.100 0 1 1-2.400-2.900Z" fill="#fff"/></g></svg>
<svg class="abs ic" style="left:957.80px;top:878px" width="42.3" height="42.3" viewBox="0 0 42 42"><rect width="42" height="42" rx="9.4" fill="#fbfbfb"/><g transform="translate(21 21.100) scale(1.100) translate(-21 -21)"><circle cx="21" cy="21" r="16.500" fill="#fbc116"/><path d="M21 21L6.710 12.750A16.500 16.500 0 0 1 35.290 12.750Z" fill="#e33b2e"/><path d="M21 21L6.710 12.750A16.500 16.500 0 0 0 21 37.500Z" fill="#2ba24c"/><path d="M21 21L21 37.500A16.500 16.500 0 0 0 35.290 12.750Z" fill="#fbc116"/><path d="M21 12.750H35.290A16.500 16.500 0 0 0 6.710 12.750L13.850 25.100Z" fill="#e33b2e"/><path d="M13.850 25.120L6.710 12.750A16.500 16.500 0 0 0 21 37.500L28.150 25.120Z" fill="#2ba24c"/><path d="M28.150 25.120L21 37.500A16.500 16.500 0 0 0 35.290 12.750H21Z" fill="#fbc116"/><circle cx="21" cy="21" r="8.250" fill="#fff"/><circle cx="21" cy="21" r="6.500" fill="#2f7cf0"/></g></svg>
<svg class="abs ic" style="left:1014.10px;top:878px" width="42.3" height="42.3" viewBox="0 0 42 42"><rect width="42" height="42" rx="9.4" fill="#fcfcfc"/><circle cx="7.800" cy="10.5" r="3.400" fill="none" stroke="#2d7df6" stroke-width=".8" stroke-opacity=".55"/><circle cx="7.800" cy="10.5" r="2.300" fill="#2d7df6"/><path d="M16 10.5h20.500" stroke="#cdcdcd" stroke-width=".9"/><circle cx="7.800" cy="21.1" r="3.400" fill="none" stroke="#f0453a" stroke-width=".8" stroke-opacity=".55"/><circle cx="7.800" cy="21.1" r="2.300" fill="#f0453a"/><path d="M16 21.1h20.500" stroke="#cdcdcd" stroke-width=".9"/><circle cx="7.800" cy="31.7" r="3.400" fill="none" stroke="#f79a1e" stroke-width=".8" stroke-opacity=".55"/><circle cx="7.800" cy="31.7" r="2.300" fill="#f79a1e"/><path d="M16 31.7h20.500" stroke="#cdcdcd" stroke-width=".9"/></svg>
<svg class="abs ic" style="left:1095.40px;top:878px" width="42.3" height="42.3" viewBox="0 0 42 42"><defs><linearGradient id="ka" x1="0" y1="0" x2="0" y2="1"><stop offset="0" stop-color="#ffffff"/><stop offset="1" stop-color="#f3f1ec"/></linearGradient></defs><rect width="42" height="42" rx="9.4" fill="url(#ka)"/><g transform="translate(15.2 0)"><circle cx="0" cy="13.700" r="7.100" fill="#f7c52e"/><path d="M-3 18h6v8l2.200 2-2.200 2v1l2.200 2-5.200 3.500-3-3Z" fill="#f7c52e"/></g><g transform="translate(20.3 0)"><circle cx="0" cy="13.700" r="7.100" fill="#52c463"/><path d="M-3 18h6v8l2.200 2-2.200 2v1l2.200 2-5.200 3.500-3-3Z" fill="#52c463"/></g><g transform="translate(25.8 0)"><circle cx="0" cy="13.700" r="7.100" fill="#2c8df7"/><path d="M-3 18h6v8l2.200 2-2.200 2v1l2.200 2-5.200 3.500-3-3Z" fill="#2c8df7"/></g><circle cx="25.800" cy="11.200" r="1.900" fill="#fff"/></svg>
<svg class="abs ic" style="left:1151.20px;top:878px" width="42.3" height="42.3" viewBox="0 0 42 42"><defs><linearGradient id="ta" x1="0" y1="0" x2="0" y2="1"><stop offset="0" stop-color="#5df36f"/><stop offset="1" stop-color="#0cbb2b"/></linearGradient><linearGradient id="tb" x1="0" y1="0" x2="0" y2="1"><stop offset="0" stop-color="#ffffff"/><stop offset="1" stop-color="#d2f2d6"/></linearGradient></defs><rect width="42" height="42" rx="9.4" fill="url(#ta)"/><rect x="6.500" y="12.500" width="20.500" height="17" rx="4.200" fill="url(#tb)"/><path d="M28.500 19.200l6.300-4.700a.9.900 0 0 1 1.400.7v11.600a.9.900 0 0 1-1.400.7l-6.300-4.700Z" fill="#e6f7e8"/></svg>
<svg class="abs ic" style="left:1207.50px;top:878px" width="42.3" height="42.3" viewBox="0 0 42 42"><defs><linearGradient id="za" x1="0" y1="0" x2="0" y2="1"><stop offset="0" stop-color="#1a6bff"/><stop offset="1" stop-color="#0a4fe0"/></linearGradient></defs><rect width="42" height="42" rx="9.4" fill="url(#za)"/><text x="21" y="24.600" text-anchor="middle" font-family="Liberation Sans,sans-serif" font-weight="700" font-size="11.500" fill="#fff" letter-spacing="-.1">zoom</text></svg>
<div class="abs rdot" style="left:76.5px;top:929.200px"></div>
<div class="abs rdot" style="left:132.8px;top:929.200px"></div>
<div class="abs rdot" style="left:301.9px;top:929.200px"></div>
<div class="abs rdot" style="left:358.3px;top:929.200px"></div>
<div class="abs rdot" style="left:470.9px;top:929.200px"></div>
<div class="abs rdot" style="left:865.3px;top:929.200px"></div>
<div class="abs rdot" style="left:1114.8px;top:929.200px"></div>
<div class="abs" style="left:1075.5px;top:876.700px;width:1px;height:49px;background:rgba(0,0,0,.17)"></div>
<div class="abs" style="left:1269.2px;top:876.700px;width:1px;height:49px;background:rgba(0,0,0,.17)"></div>
<div class="abs badge" style="left:141.200px;top:872.500px">78</div>
<div class="abs badge" style="left:1179.400px;top:872.700px">13</div>
<svg class="abs" style="left:1285px;top:886.500px" width="51" height="38" viewBox="0 0 51 38"><rect x=".5" y="1" width="48" height="25" fill="#fdfdfd" stroke="#d9d9d9" stroke-width=".5"/><path d="M3 3.5h7.5" stroke="#a4a8ae" stroke-width=".8" stroke-dasharray="1.600 .6"/><path d="M12 3.5h6" stroke="#a4a8ae" stroke-width=".8" stroke-dasharray="1.600 .6"/><path d="M21 3.5h6" stroke="#a4a8ae" stroke-width=".8" stroke-dasharray="1.600 .6"/><path d="M30 3.5h7.5" stroke="#a4a8ae" stroke-width=".8" stroke-dasharray="1.600 .6"/><path d="M39 3.5h6" stroke="#a4a8ae" stroke-width=".8" stroke-dasharray="1.600 .6"/><path d="M3 5.8h6" stroke="#a4a8ae" stroke-width=".8" stroke-dasharray="1.600 .6"/><path d="M12 5.8h6" stroke="#a4a8ae" stroke-width=".8" stroke-dasharray="1.600 .6"/><path d="M21 5.8h7.5" stroke="#a4a8ae" stroke-width=".8" stroke-dasharray="1.600 .6"/><path d="M30 5.8h6" stroke="#a4a8ae" stroke-width=".8" stroke-dasharray="1.600 .6"/><path d="M39 5.8h6" stroke="#a4a8ae" stroke-width=".8" stroke-dasharray="1.600 .6"/><path d="M3 8.1h6" stroke="#a4a8ae" stroke-width=".8" stroke-dasharray="1.600 .6"/><path d="M12 8.1h7.5" stroke="#a4a8ae" stroke-width=".8" stroke-dasharray="1.600 .6"/><path d="M21 8.1h6" stroke="#a4a8ae" stroke-width=".8" stroke-dasharray="1.600 .6"/><path d="M30 8.1h6" stroke="#a4a8ae" stroke-width=".8" stroke-dasharray="1.600 .6"/><path d="M39 8.1h7.5" stroke="#a4a8ae" stroke-width=".8" stroke-dasharray="1.600 .6"/><path d="M3 10.399999999999999h7.5" stroke="#a4a8ae" stroke-width=".8" stroke-dasharray="1.600 .6"/><path d="M12 10.399999999999999h6" stroke="#a4a8ae" stroke-width=".8" stroke-dasharray="1.600 .6"/><path d="M21 10.399999999999999h6" stroke="#a4a8ae" stroke-width=".8" stroke-dasharray="1.600 .6"/><path d="M3 12.7h6" stroke="#a4a8ae" stroke-width=".8" stroke-dasharray="1.600 .6"/><path d="M12 12.7h6" stroke="#a4a8ae" stroke-width=".8" stroke-dasharray="1.600 .6"/><path d="M21 12.7h7.5" stroke="#a4a8ae" stroke-width=".8" stroke-dasharray="1.600 .6"/><path d="M3 15.0h6" stroke="#a4a8ae" stroke-width=".8" stroke-dasharray="1.600 .6"/><path d="M12 15.0h7.5" stroke="#a4a8ae" stroke-width=".8" stroke-dasharray="1.600 .6"/><path d="M21 15.0h6" stroke="#a4a8ae" stroke-width=".8" stroke-dasharray="1.600 .6"/><path d="M30 15.0h6" stroke="#a4a8ae" stroke-width=".8" stroke-dasharray="1.600 .6"/><path d="M39 15.0h7.5" stroke="#a4a8ae" stroke-width=".8" stroke-dasharray="1.600 .6"/><path d="M3 17.299999999999997h7.5" stroke="#a4a8ae" stroke-width=".8" stroke-dasharray="1.600 .6"/><path d="M12 17.299999999999997h6" stroke="#a4a8ae" stroke-width=".8" stroke-dasharray="1.600 .6"/><path d="M21 17.299999999999997h6" stroke="#a4a8ae" stroke-width=".8" stroke-dasharray="1.600 .6"/><path d="M30 17.299999999999997h7.5" stroke="#a4a8ae" stroke-width=".8" stroke-dasharray="1.600 .6"/><path d="M39 17.299999999999997h6" stroke="#a4a8ae" stroke-width=".8" stroke-dasharray="1.600 .6"/><path d="M3 19.599999999999998h6" stroke="#a4a8ae" stroke-width=".8" stroke-dasharray="1.600 .6"/><path d="M12 19.599999999999998h6" stroke="#a4a8ae" stroke-width=".8" stroke-dasharray="1.600 .6"/><path d="M21 19.599999999999998h7.5" stroke="#a4a8ae" stroke-width=".8" stroke-dasharray="1.600 .6"/><path d="M30 19.599999999999998h6" stroke="#a4a8ae" stroke-width=".8" stroke-dasharray="1.600 .6"/><path d="M39 19.599999999999998h6" stroke="#a4a8ae" stroke-width=".8" stroke-dasharray="1.600 .6"/><path d="M3 21.9h6" stroke="#a4a8ae" stroke-width=".8" stroke-dasharray="1.600 .6"/><path d="M12 21.9h7.5" stroke="#a4a8ae" stroke-width=".8" stroke-dasharray="1.600 .6"/><path d="M21 21.9h6" stroke="#a4a8ae" stroke-width=".8" stroke-dasharray="1.600 .6"/><path d="M30 21.9h6" stroke="#a4a8ae" stroke-width=".8" stroke-dasharray="1.600 .6"/><path d="M39 21.9h7.5" stroke="#a4a8ae" stroke-width=".8" stroke-dasharray="1.600 .6"/><rect x="33.500" y="22" width="15" height="14.500" rx="3" fill="#f4f4f4" stroke="#cfcfcf" stroke-width=".4"/><rect x="35" y="23.300" width="12" height="7" rx="1.500" fill="#8db2e4"/><rect x="35" y="28.500" width="12" height="3.500" fill="#33588d"/><rect x="41.500" y="29" width="7" height="2.200" rx="1" fill="#17191c"/><path d="M42 31h6l1 5h-8Z" fill="#e9ecef" stroke="#8d949b" stroke-width=".4"/></svg>
<svg class="abs" style="left:1347.500px;top:874.500px" width="41" height="49" viewBox="0 0 41 49"><defs><linearGradient id="tr" x1="0" y1="0" x2="1" y2="0"><stop offset="0" stop-color="#d4d4d4"/><stop offset=".25" stop-color="#f4f4f4"/><stop offset=".6" stop-color="#eaeaea"/><stop offset="1" stop-color="#cfcfcf"/></linearGradient></defs>
<path d="M5 8l4-3 3 3 4-5 4 4 4-4 4 5 4-3 4 3v4H5Z" fill="#3a3f45"/><path d="M9 6l3 2-2 3ZM18 3l3 3-4 2ZM27 4l3 4-4 1Z" fill="#f1f3f4"/><path d="M13 7l2 3-3 1Z" fill="#e25b4b"/><path d="M22 6l3 2-2 3Z" fill="#4a90e2"/><path d="M30 7l2 3-3 1Z" fill="#6cc067"/><path d="M6 9l2 2-2 1Z" fill="#f0b429"/>
<path d="M2.500 9.500h36l-3.600 35.500a3 3 0 0 1-3 2.700H9.100a3 3 0 0 1-3-2.700Z" fill="url(#tr)" fill-opacity=".62" stroke="#c9c9c9" stroke-width=".6"/><ellipse cx="20.500" cy="9.700" rx="18" ry="2.200" fill="none" stroke="#f7f7f7" stroke-width="1.200"/><path d="M12 20c2-2 5 1 8-1s6 1 9-1" stroke="#e6c9c0" stroke-width="3" stroke-opacity=".35" fill="none"/></svg>
</div>
</body>
</html>
